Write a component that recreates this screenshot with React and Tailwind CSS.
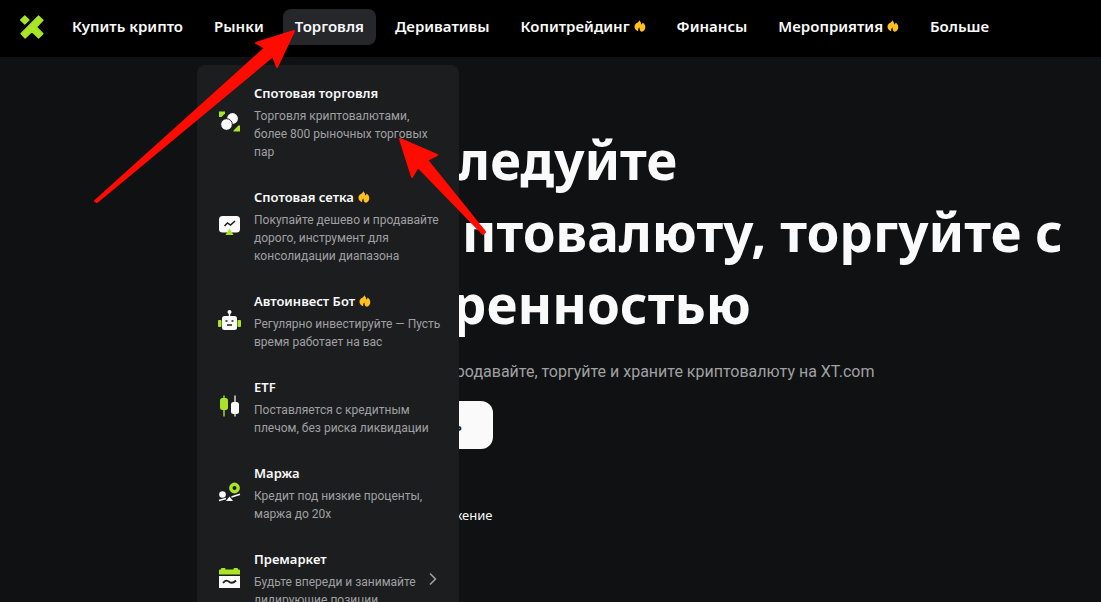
import { ChevronRight } from "lucide-react";

const navItems = [
  { label: "Купить крипто" },
  { label: "Рынки" },
  { label: "Торговля", active: true },
  { label: "Деривативы" },
  { label: "Копитрейдинг", hot: true },
  { label: "Финансы" },
  { label: "Мероприятия", hot: true },
  { label: "Больше" }
];

function Logo() {
  return (
    <svg width="24" height="24" viewBox="0 0 24 24" fill="#a9e426">
      <path d="M4.8 0.8 L9 5 L4.8 9.2 L0.6 5 Z" stroke="#a9e426" strokeWidth="1.2" strokeLinejoin="round" />
      <path d="M18.5 1 L23 5.3 L16.5 12 L23 18.7 L18.6 23 L12.8 17.500 L11 17.500 L5.1 23 L0.9 18.7 Z" stroke="#a9e426" strokeWidth="1.2" strokeLinejoin="round" />
    </svg>
  );
}

function Fire() {
  return (
    <svg className="shrink-0" width="12" height="12" viewBox="0 0 12 12">
      <path
        d="M5.2 0.3 C6.6 1.5 7.2 2.8 7.2 4.6 C8 4.2 8.5 3.400 8.7 2.6 C10.2 3.8 11.3 5.4 11.3 7.2 C11.3 9.5 9.8 11.2 7.8 11.7 C6.9 11.5 6.2 11.1 5.9 10.3 C5.5 9.4 5.500 8.6 5.6 7.6 C4.6 8.2 3.9 9.400 4.2 11.3 C1.9 10.5 0.5 8.9 0.5 6.8 C0.5 5.4 1.1 4.5 2 3.6 C2.9 2.8 4.9 2.5 5.2 0.3 Z"
        fill="#ffbf1f"
      />
    </svg>
  );
}

function SpotIcon() {
  return (
    <svg width="24" height="24" viewBox="0 0 24 24">
      <path d="M1 1.5h6v2L3.5 7H1z" fill="#a9e426" />
      <path d="M22 15.5V21.500h-6.5v-1L20.500 15.5z" fill="#a9e426" />
      <circle cx="14.5" cy="8.500" r="5.4" fill="#fafafa" />
      <circle cx="8.5" cy="14.500" r="5.8" fill="#fafafa" stroke="#1c1d1f" />
    </svg>
  );
}

function GridIcon() {
  return (
    <svg width="24" height="24" viewBox="0 0 24 24">
      <rect x="1" y="2" width="21" height="16.5" rx="3.5" fill="#fafafa" />
      <path d="M6.5 12L9.5 9L12.5 11L17 7" fill="none" stroke="#1c1d1f" strokeWidth="1.5" />
      <path d="M11.500 14.5L15.500 21H7.500z" fill="#a9e426" />
    </svg>
  );
}

function BotIcon() {
  return (
    <svg width="24" height="24" viewBox="0 0 24 24">
      <rect x="0" y="11" width="3.5" height="7" rx="1" fill="#a9e426" />
      <rect x="19.5" y="11" width="3.5" height="7" rx="1" fill="#a9e426" />
      <path d="M11.5 3v5" stroke="#fafafa" strokeWidth="1.5" />
      <circle cx="11.5" cy="3" r="2" fill="#fafafa" />
      <rect x="4" y="7" width="15" height="14" rx="2.5" fill="#fafafa" />
      <path d="M7.5 12h2M13.5 12h2M9 16h5" stroke="#1c1d1f" strokeWidth="1.6" />
    </svg>
  );
}

function EtfIcon() {
  return (
    <svg width="24" height="24" viewBox="0 0 24 24">
      <path d="M6 0.500v21" stroke="#7da823" strokeWidth="2" />
      <rect x="2" y="3" width="8" height="12" rx="2.5" fill="#a9e426" />
      <path d="M17 0.500v21" stroke="#aaaaac" strokeWidth="2" />
      <rect x="13" y="7" width="8" height="12" rx="2.5" fill="#fafafa" />
    </svg>
  );
}

function MarginIcon() {
  return (
    <svg width="24" height="24" viewBox="0 0 24 24">
      <circle cx="16.5" cy="7" r="3.7" fill="none" stroke="#a9e426" strokeWidth="3.4" />
      <circle cx="4.5" cy="13.5" r="3.3" fill="#fafafa" />
      <path d="M1 19.5L8 17.5M13.5 16L22 13.3" stroke="#fafafa" strokeWidth="1.7" />
      <path d="M11.5 15.5L15 20H8z" fill="#fafafa" />
    </svg>
  );
}

function PremarketIcon() {
  return (
    <svg width="24" height="24" viewBox="0 0 24 24">
      <path d="M1 7.500V3.5Q1 2.500 2 2.500H3V1.500Q3 1 4 1H6.500Q7.500 1 7.500 2V2.500H15.500V2Q15.500 1 16.500 1H19Q20 1 20 2V2.500H21Q22 2.500 22 3.500V7.500z" fill="#a9e426" />
      <path d="M1 9h21v12H1z" fill="#fafafa" />
      <path d="M5 16C7.5 12.8 9 13 11.5 15C13.5 16.5 15.5 16 18 13.5" fill="none" stroke="#1c1d1f" strokeWidth="1.8" />
    </svg>
  );
}

const menuItems = [
  {
    title: "Спотовая торговля",
    text: "Торговля криптовалютами, более 800 рыночных торговых пар",
    Icon: SpotIcon
  },
  {
    title: "Спотовая сетка",
    text: "Покупайте дешево и продавайте дорого, инструмент для консолидации диапазона",
    Icon: GridIcon,
    hot: true
  },
  {
    title: "Автоинвест Бот",
    text: "Регулярно инвестируйте — Пусть время работает на вас",
    Icon: BotIcon,
    hot: true
  },
  {
    title: "ETF",
    text: "Поставляется с кредитным плечом, без риска ликвидации",
    Icon: EtfIcon
  },
  {
    title: "Маржа",
    text: "Кредит под низкие проценты, маржа до 20x",
    Icon: MarginIcon
  },
  {
    title: "Премаркет",
    text: "Будьте впереди и занимайте лидирующие позиции",
    Icon: PremarketIcon,
    more: true
  }
];

function TradeMenu() {
  return (
    <div className="absolute top-[65px] left-[197px] w-[262px] rounded-lg bg-[#1c1d1f] py-2">
      {menuItems.map(({ title, text, Icon, hot, more }) => (
        <a key={title} href="#" className="flex items-center pt-2.5 pr-4 pb-4 pl-[21px]">
          <span className="w-9 shrink-0">
            <Icon />
          </span>
          <span className="min-w-0 flex-1">
            <span className="flex items-center gap-1 text-[13px] leading-5 font-semibold text-[#fafafa]">
              {title}
              {hot && <Fire />}
            </span>
            <span className="mt-1 block font-['Roboto',sans-serif] text-[12px] leading-[18px] text-[#a0a0a3]">{text}</span>
          </span>
          {more && <ChevronRight size={20} strokeWidth={2} className="shrink-0 text-[#a0a0a3]" />}
        </a>
      ))}
    </div>
  );
}

function Arrows() {
  return (
    <svg
      className="pointer-events-none absolute top-0 left-0"
      width="500"
      height="250"
      viewBox="0 0 500 250"
      fill="#ff0b00"
      stroke="#ff0b00"
      strokeWidth="2"
      strokeLinejoin="round"
    >
      <path d="M294 31 L277 67 L273 56 L97 202 L95 201 L265 48 L256 43 Z" />
      <path d="M400 139 L437 155 L427 160 L485 232 L483 234 L418 167 L412 177 Z" />
    </svg>
  );
}

export default function App() {
  return (
    <div className="relative h-screen overflow-hidden bg-[#101113] font-['Noto_Sans',sans-serif] text-[#fafafa]">

      <header className="flex h-[57px] items-center bg-black pb-[3px] pl-5">
        <a href="#" aria-label="XT.com" className="mr-4">
          <Logo />
        </a>
        <nav className="flex items-center gap-[7px] whitespace-nowrap">
          {navItems.map((item) => (
            <a
              key={item.label}
              href="#"
              className={`flex h-9 items-center gap-1 rounded-lg px-3 pb-0.5 text-[15px] font-semibold ${item.active ? "bg-[#26272b]" : ""}`}
            >
              {item.label}
              {item.hot && <Fire />}
            </a>
          ))}
        </nav>
      </header>

      <main className="pt-[67px] pl-[360px]">
        <h1 className="text-[53px] leading-[72px] font-bold whitespace-nowrap">
          Исследуйте
          <br />
          криптовалюту, торгуйте с
          <br />
          уверенностью
        </h1>
        <p className="mt-5 font-['Roboto',sans-serif] text-[16px] leading-6 text-[#a0a0a3]">
          Покупайте, продавайте, торгуйте и храните криптовалюту на XT.com
        </p>
        <button className="mt-[17px] h-12 w-[133px] rounded-xl bg-[#fafafa] text-[14px] font-semibold text-[#101113]">
          Торговать
        </button>
        <p className="mt-14 text-[13px] leading-5">Скачать приложение</p>
      </main>

      <TradeMenu />
      <Arrows />

    </div>
  );
}
